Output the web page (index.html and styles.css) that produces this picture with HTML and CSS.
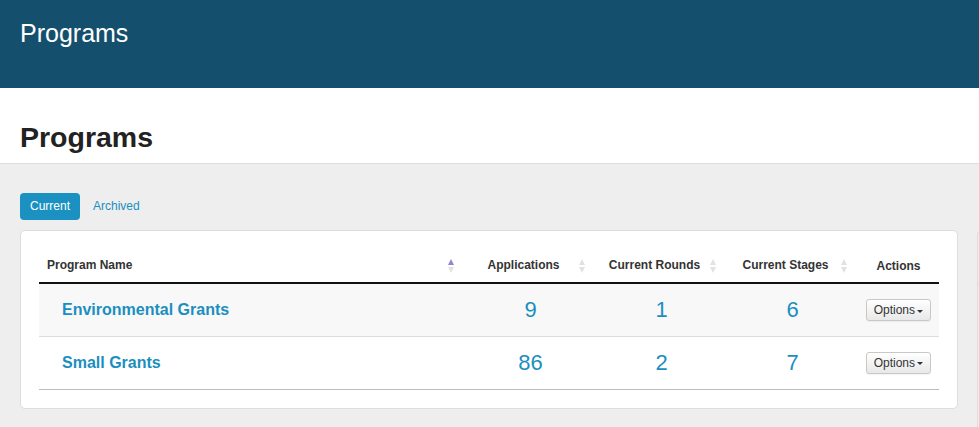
FILE: index.html
```html
<!DOCTYPE html>
<html lang="en">
<head>
    <meta charset="UTF-8">
    <meta name="viewport" content="width=device-width, initial-scale=1.0">
    <title>Programs</title>
    <link rel="stylesheet" href="styles.css">
</head>
<body>
 <div class="topbar">
    <div class="topbar__title">Programs</div>
 </div>

 <div class="page-head">
    <h1 class="page-head__title">Programs</h1>
 </div>

 <div class="page-body">
    <div class="tabs">
        <a class="tabs__tab tabs__tab--active" href="#">Current</a>
        <a class="tabs__tab" href="#">Archived</a>
    </div>

    <div class="columns">
        <div class="card">
            <table class="grid">
                <thead>
                    <tr>
                        <th class="grid__name">Program Name <span class="sort sort--asc"></span></th>
                        <th class="grid__num">Applications <span class="sort"></span></th>
                        <th class="grid__num">Current Rounds <span class="sort"></span></th>
                        <th class="grid__num">Current Stages <span class="sort"></span></th>
                        <th class="grid__actions">Actions</th>
                    </tr>
                </thead>
                <tbody>
                    <tr class="grid__row--odd">
                        <td class="grid__name"><a href="#">Environmental Grants</a></td>
                        <td class="grid__num"><a href="#">9</a></td>
                        <td class="grid__num"><a href="#">1</a></td>
                        <td class="grid__num"><a href="#">6</a></td>
                        <td class="grid__actions"><button class="btn-options">Options <span class="caret"></span></button></td>
                    </tr>
                    <tr>
                        <td class="grid__name"><a href="#">Small Grants</a></td>
                        <td class="grid__num"><a href="#">86</a></td>
                        <td class="grid__num"><a href="#">2</a></td>
                        <td class="grid__num"><a href="#">7</a></td>
                        <td class="grid__actions"><button class="btn-options">Options <span class="caret"></span></button></td>
                    </tr>
                </tbody>
            </table>
        </div>
        <div class="side-card">
            <div class="side-card__head"></div>
        </div>
    </div>
 </div>
</body>
</html>
```

FILE: styles.css
```css
html,
body {
    width: 100%;
    height: 100%;
}

body {
    margin: 0;
    overflow: hidden;
    color: #333;
    font-family: "Liberation Sans", Arial, sans-serif;
    background: #EEEEEE;
}

a {
    color: #1A8FBF;
    text-decoration: none;
}

.topbar {
    height: 88px;
    padding: 0 20px;
    box-sizing: border-box;
    background: #14506E;
}

.topbar__title {
    padding-top: 18px;
    color: #FFF;
    font-size: 25px;
    line-height: 30px;
}

.page-head {
    height: 76px;
    padding: 0 20px;
    box-sizing: border-box;
    background: #FFF;
    border-bottom: 1px solid #DDD;
}

.page-head__title {
    margin: 0;
    padding-top: 32px;
    color: #222;
    font-size: 28.5px;
    font-weight: bold;
    line-height: 34px;
}

.page-body {
    padding: 29px 0 0 20px;
}

.tabs {
    display: flex;
    align-items: center;
    gap: 13px;
    height: 27px;
}

.tabs__tab {
    display: block;
    padding: 0 11px 0 0;
    font-size: 12px;
    line-height: 27px;
}

.tabs__tab--active {
    width: 60px;
    padding: 0;
    text-align: center;
    color: #FFF;
    border-radius: 4px;
    background: #1A91C0;
}

.columns {
    display: flex;
    align-items: flex-start;
    gap: 19px;
    margin-top: 10px;
}

.card {
    flex: 0 0 938px;
    box-sizing: border-box;
    padding: 18px;
    border: 1px solid #DDD;
    border-radius: 5px;
    background: #FFF;
}

.side-card {
    flex: 0 0 300px;
    height: 220px;
    border: 1px solid #DDD;
    border-radius: 5px;
    background: #EEE;
}

.side-card__head {
    height: 53px;
    border-bottom: 1px solid #DDD;
}

.grid {
    width: 900px;
    border-collapse: collapse;
}

.grid th {
    position: relative;
    height: 34px;
    padding: 0 8px 1px;
    box-sizing: border-box;
    color: #333;
    font-size: 12px;
    font-weight: bold;
    text-align: left;
    border-bottom: 2px solid #111;
}

.grid td {
    height: 53px;
    padding: 0 8px;
    box-sizing: border-box;
    border-bottom: 1px solid #DDD;
}

.grid tbody tr:last-child td {
    border-bottom-color: #BBB;
}

.grid__row--odd td {
    background: #F8F8F8;
}

.grid td.grid__name {
    padding-left: 23px;
    font-size: 16px;
    font-weight: bold;
}

.grid th.grid__name {
    width: 426px;
}

.grid th.grid__num {
    width: 131px;
    padding-right: 22px;
    text-align: center;
}

.grid td.grid__num {
    font-size: 22px;
    text-align: center;
}

.grid th.grid__actions,
.grid td.grid__actions {
    padding: 0;
    text-align: center;
}

.sort {
    position: absolute;
    top: 10px;
    right: 10px;
    width: 7px;
    height: 14px;
}

.sort:before, .sort:after {
    content: "";
    position: absolute;
    left: 0;
    border-left: 3.5px solid transparent;
    border-right: 3.5px solid transparent;
}

.sort:before {
    top: 0;
    border-bottom: 6px solid #E2E2E2;
}

.sort:after {
    bottom: 0;
    border-top: 6px solid #E2E2E2;
}

.sort--asc:before {
    border-bottom-color: #8A88D0;
}

.btn-options {
    height: 22px;
    margin-top: 1px;
    padding: 0 7px;
    color: #333;
    font-family: "Liberation Sans", Arial, sans-serif;
    font-size: 12px;
    white-space: nowrap;
    border: 1px solid #C8C8C8;
    border-radius: 3px;
    background: linear-gradient(#FFF, #E8E8E8);
    box-shadow: 0 1px 1px rgba(0, 0, 0, 0.05);
    cursor: pointer;
}

.caret {
    display: inline-block;
    vertical-align: middle;
    margin-left: -1px;
    border-top: 3px solid #333;
    border-left: 3px solid transparent;
    border-right: 3px solid transparent;
}
```
